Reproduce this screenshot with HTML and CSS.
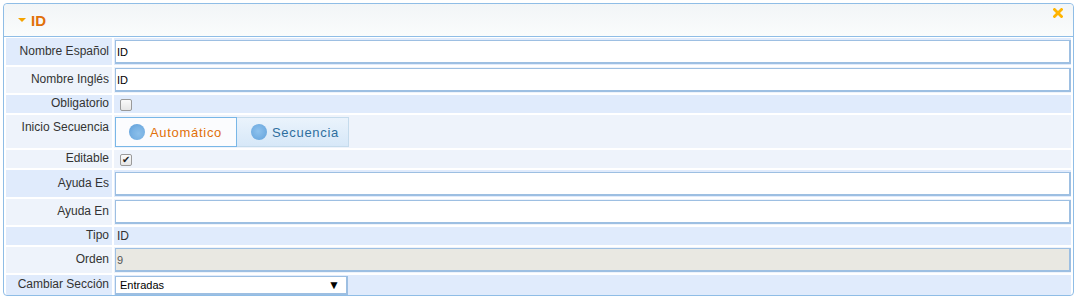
FILE: index.html
```html
<!DOCTYPE html>
<html lang="es">
<head>
    <meta charset="UTF-8">
    <title>Campo ID</title>
    <link rel="stylesheet" href="styles.css">
</head>
<body>
    <div class="panel">
        <div class="panel-header">
            <span class="caret"></span>
            <span class="panel-title">ID</span>
            <svg class="close" width="10" height="10" viewBox="0 0 10 10">
                <path d="M1.5 1.5 L8.5 8.5 M8.5 1.5 L1.5 8.5" stroke="#ffb400" stroke-width="2.8" stroke-linecap="square"/>
            </svg>
        </div>
        <table class="fields">
            <tr class="alt r-input">
                <td class="lbl">Nombre Español</td>
                <td class="val"><input type="text" class="txt" value="ID"></td>
            </tr>
            <tr class="r-input2">
                <td class="lbl">Nombre Inglés</td>
                <td class="val"><input type="text" class="txt" value="ID"></td>
            </tr>
            <tr class="alt r-small">
                <td class="lbl">Obligatorio</td>
                <td class="val"><span class="chk"></span></td>
            </tr>
            <tr class="r-radio">
                <td class="lbl lbl-top">Inicio Secuencia</td>
                <td class="val">
                    <div class="buttonset">
                        <span class="rbtn active"><span class="dot"></span>Automático</span>
                        <span class="rbtn"><span class="dot"></span>Secuencia</span>
                    </div>
                </td>
            </tr>
            <tr class="r-small">
                <td class="lbl">Editable</td>
                <td class="val"><span class="chk checked">&#10004;</span></td>
            </tr>
            <tr class="alt r-input">
                <td class="lbl">Ayuda Es</td>
                <td class="val"><input type="text" class="txt"></td>
            </tr>
            <tr class="r-input2">
                <td class="lbl">Ayuda En</td>
                <td class="val"><input type="text" class="txt"></td>
            </tr>
            <tr class="alt r-small">
                <td class="lbl">Tipo</td>
                <td class="val"><span class="plain">ID</span></td>
            </tr>
            <tr class="r-input2">
                <td class="lbl">Orden</td>
                <td class="val"><input type="text" class="txt readonly" value="9" readonly></td>
            </tr>
            <tr class="alt r-select">
                <td class="lbl">Cambiar Sección</td>
                <td class="val">
                    <div class="select">Entradas<span class="arrow">&#9660;</span></div>
                </td>
            </tr>
        </table>
    </div>
</body>
</html>
```

FILE: styles.css
```css
* {
    box-sizing: border-box;
}
body {
    margin: 3px;
    font-family: "Liberation Sans", Arial, sans-serif;
    font-size: 12px;
    color: #333;
    background: #fff;
}
.panel {
    border: 1px solid #8fbde6;
    border-radius: 4px;
    background: #fff;
    height: 293px;
    overflow: hidden;
}
.panel-header {
    display: flex;
    align-items: center;
    height: 33px;
    padding: 0 10px 0 14px;
    background: linear-gradient(#f2f5f7, #fafcfc);
    border-bottom: 1px solid #8fbde6;
    border-radius: 4px 4px 0 0;
}
.caret {
    width: 0;
    height: 0;
    border-left: 4px solid transparent;
    border-right: 4px solid transparent;
    border-top: 4px solid #f5a300;
    margin-right: 5px;
    margin-top: -1px;
}
.panel-title {
    font-size: 15px;
    font-weight: bold;
    color: #e17009;
    flex: 1;
}
.close {
    margin-top: -14px;
    margin-right: 0;
}
.fields {
    width: 100%;
    border-spacing: 2px;
    margin-top: -1px;
}
.fields td {
    padding: 0;
    background: #eef3fb;
}
.fields tr.alt td {
    background: #e0ebfc;
}
.lbl {
    width: 106px;
    text-align: right;
    padding: 0 3px 2px 0 !important;
    vertical-align: middle;
    color: #333;
    white-space: nowrap;
}
.lbl-top {
    vertical-align: top;
    padding-top: 5px !important;
}
.val {
    vertical-align: middle;
    padding-left: 1px !important;
}
.r-input td { height: 27px; }
.r-input2 td { height: 26px; }
.r-small td { height: 18px; }
.r-radio td { height: 33px; }
.r-select td { height: 20px; }
.txt {
    display: block;
    width: 100%;
    height: 24px;
    border: 1px solid #9dbfe2;
    border-width: 1px 2px 2px 1px;
    background: #fff;
    font-family: "Liberation Sans", Arial, sans-serif;
    font-size: 11px;
    color: #000;
    padding: 1px 1px 0;
    outline: none;
}
.txt.readonly {
    background: #e9e8e2;
    color: #555;
}
.chk {
    display: inline-block;
    width: 12px;
    height: 12px;
    margin: 0 0 0 5px;
    border: 1px solid #9a9a9a;
    border-radius: 2px;
    background: linear-gradient(#fafafa, #e6e6e6);
    vertical-align: middle;
    font-size: 10px;
    line-height: 10px;
    text-align: center;
    color: #222;
}
.plain {
    padding-left: 2px;
    color: #333;
}
.buttonset {
    display: flex;
    padding: 1px 0 0;
}
.rbtn {
    display: flex;
    align-items: center;
    flex-shrink: 0;
    height: 30px;
    padding: 0 0 0 13px;
    border: 1px solid #c5dbec;
    background: linear-gradient(#eaf3fc, #d7e8f8);
    color: #2e6e9e;
    font-size: 13px;
    letter-spacing: 0.7px;
}
.rbtn.active {
    background: #fbfcfe;
    border-color: #79b7e7;
    color: #e17009;
    width: 122px;
}
.rbtn + .rbtn {
    border-left: none;
    width: 112px;
    padding-left: 14px;
}
.dot {
    flex-shrink: 0;
    width: 16px;
    height: 16px;
    border-radius: 50%;
    background: radial-gradient(circle at 45% 45%, #8ec2ee 0, #6fabe0 70%, #6aa6dc 100%);
    margin-right: 5px;
}
.rbtn.active .dot {
    background: radial-gradient(circle at 60% 60%, #8bbfea 0, #7ab3e4 45%, #5a9bd8 100%);
}
.select {
    position: relative;
    width: 233px;
    height: 19px;
    border: 1px solid #9dbfe2;
    border-width: 1px 2px 2px 1px;
    background: #fff;
    font-size: 11px;
    line-height: 14px;
    color: #000;
    padding: 1px 4px;
}
.arrow {
    position: absolute;
    right: 6px;
    top: 2px;
    font-size: 12px;
    line-height: 12px;
}
```
